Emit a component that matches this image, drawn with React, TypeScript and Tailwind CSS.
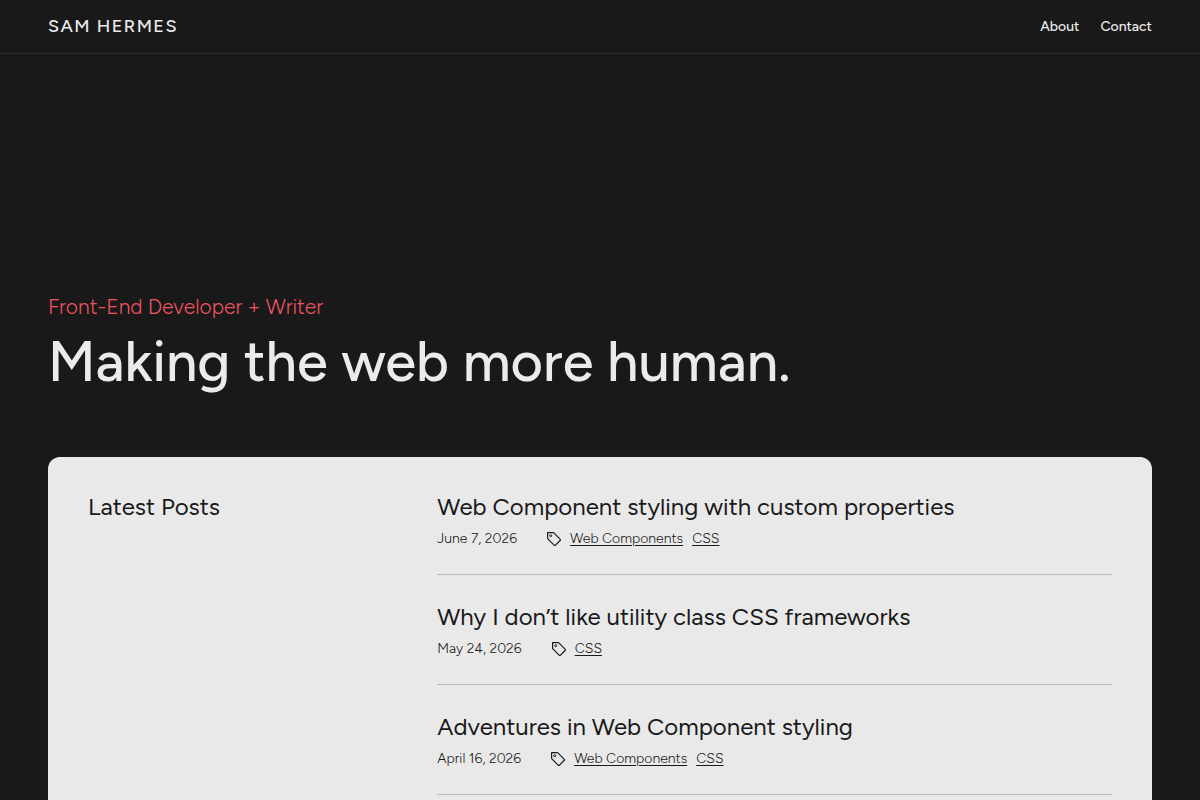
type Post = {
  title: string;
  date: string;
  dateTime: string;
  tags: string[];
};

const posts: Post[] = [
  {
    title: "Web Component styling with custom properties",
    date: "June 7, 2026",
    dateTime: "2026-06-07",
    tags: ["Web Components", "CSS"],
  },
  {
    title: "Why I don’t like utility class CSS frameworks",
    date: "May 24, 2026",
    dateTime: "2026-05-24",
    tags: ["CSS"],
  },
  {
    title: "Adventures in Web Component styling",
    date: "April 16, 2026",
    dateTime: "2026-04-16",
    tags: ["Web Components", "CSS"],
  },
];

function TagIcon() {
  return (
    <svg
      viewBox="0 0 16 16"
      className="mr-2 ml-[29px] size-4 shrink-0"
      fill="none"
      stroke="currentColor"
      strokeWidth="1.2"
      strokeLinejoin="round"
      aria-hidden="true"
    >
      <path d="M1.6 1.6h5.6c.3 0 .5.1.7.3l6.2 6.2c.4.4.4 1 0 1.4l-4.6 4.6c-.4.4-1 .4-1.4 0L1.9 7.9c-.2-.2-.3-.4-.3-.7z" />
      <circle cx="4.7" cy="4.7" r="1" strokeWidth="1" />
    </svg>
  );
}

function SiteHeader() {
  return (
    <header className="flex items-center justify-between border-b border-[#2c2c2c] px-12 py-4">
      <a href="#home" className="text-lg leading-[21px] font-medium tracking-[0.08em]">
        SAM HERMES
      </a>
      <nav className="flex gap-[21px] text-sm leading-[21px] font-medium">
        <a href="#about">About</a>
        <a href="#contact">Contact</a>
      </nav>
    </header>
  );
}

function PostItem({ post }: { post: Post }) {
  return (
    <li className="border-b border-[#bcbcbc] pt-7 pb-[25px] first:pt-0">
      <h3 className="text-2xl leading-7">
        <a href="#post">{post.title}</a>
      </h3>
      <div className="mt-2 flex items-center text-sm leading-5 font-light">
        <time dateTime={post.dateTime}>{post.date}</time>
        <TagIcon />
        <ul className="flex gap-[9px]">
          {post.tags.map((tag) => (
            <li key={tag}>
              <a href="#tag" className="underline underline-offset-2">
                {tag}
              </a>
            </li>
          ))}
        </ul>
      </div>
    </li>
  );
}

export default function App() {
  return (
    <div className="min-h-screen bg-[#191919] font-['Figtree','Inter',sans-serif] text-[#ebebeb]">
      <SiteHeader />
      <main className="px-12">
        <section className="pt-60 pb-[61px]">
          <p className="text-[21px] leading-[26px] font-light text-[#ee5560]">
            Front-End Developer + Writer
          </p>
          <h1 className="mt-2 text-[56px] leading-[68px] font-medium">Making the web more human.</h1>
        </section>

        <section className="grid grid-cols-3 gap-6 rounded-t-xl bg-[#e9e9e9] px-10 pt-9 pb-10 text-[#191919]">
          <h2 className="text-2xl leading-7">Latest Posts</h2>
          <ul className="col-span-2">
            {posts.map((post) => (
              <PostItem key={post.title} post={post} />
            ))}
          </ul>
        </section>
      </main>
    </div>
  );
}
